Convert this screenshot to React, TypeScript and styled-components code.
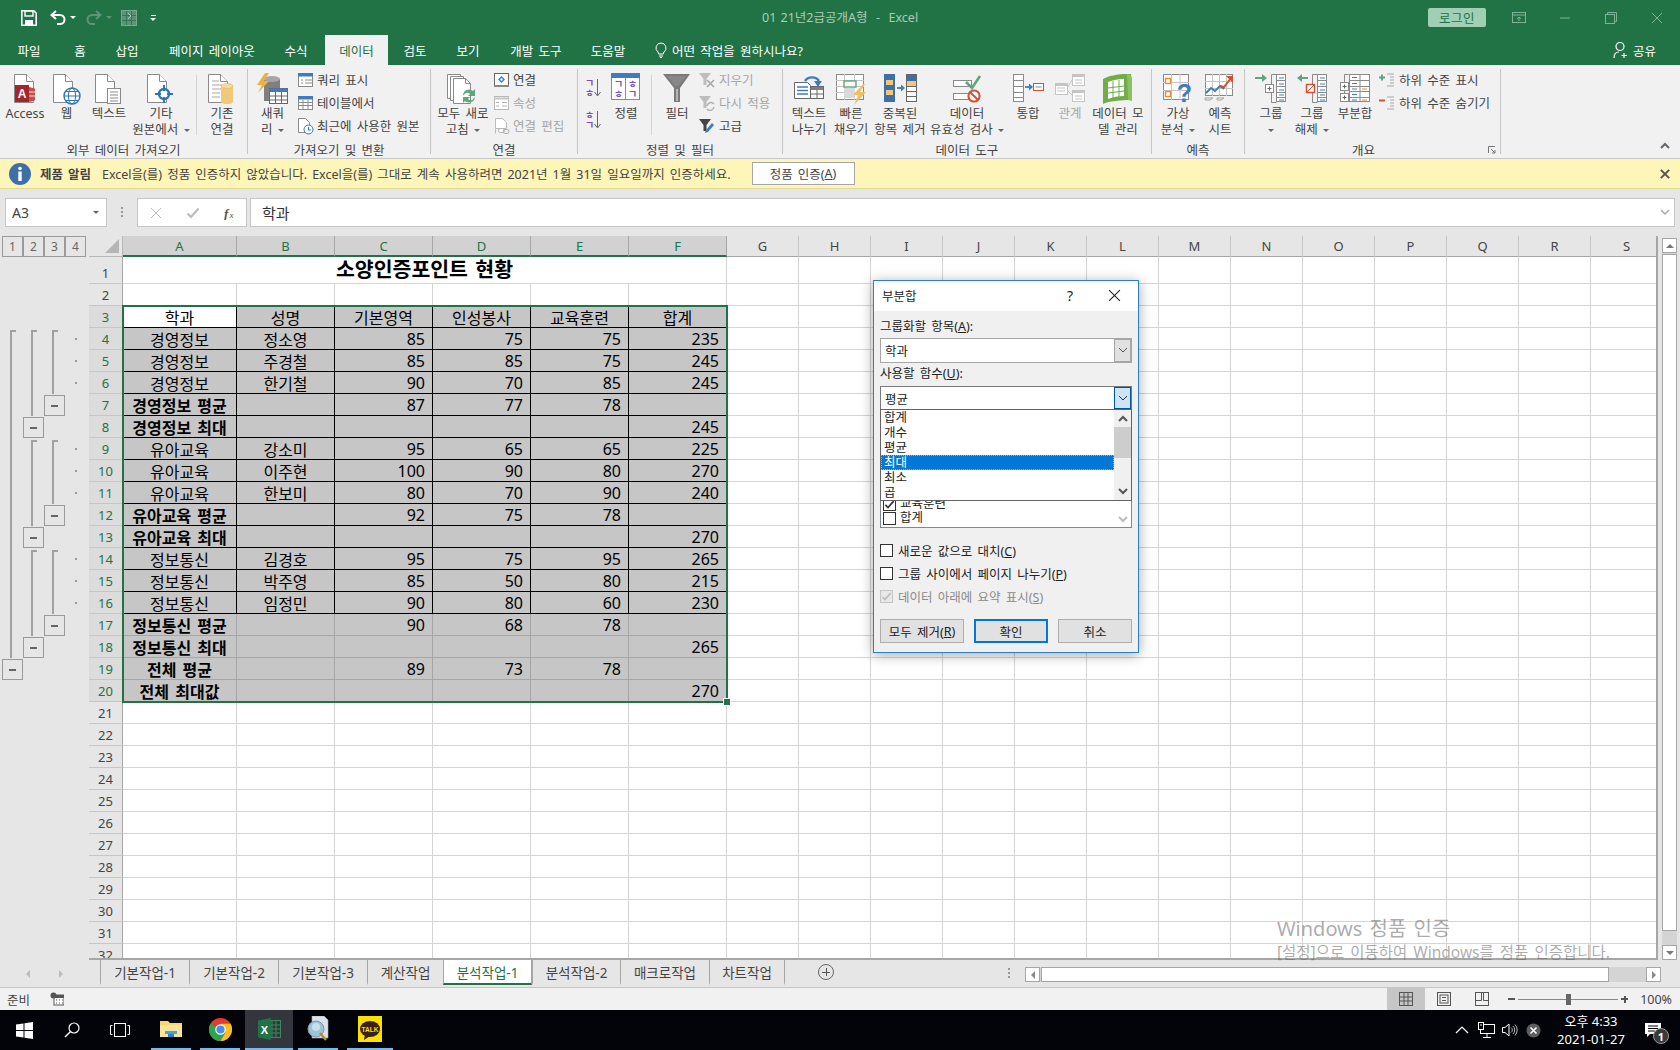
import React from "react";
import styled, { createGlobalStyle } from "styled-components";

const FONT = `"Noto Sans", "Noto Sans CJK KR", sans-serif`;
const GREEN = "#217346";

const Global = createGlobalStyle`
  html, body {
    margin: 0;
    width: 1680px;
    height: 1050px;
    overflow: hidden;
    background: #e6e6e6;
    font-family: ${FONT};
  }
  * { box-sizing: border-box; }
  svg { display: block; flex: none; }
`;

/* ---------- icons ---------- */

const PageBase = () => (
  <>
    <path d="M2.5 1.5h12l7 7v21h-19z" fill="#fff" stroke="#8a8a8a" />
    <path d="M14.5 1.5v7h7" fill="#fff" stroke="#8a8a8a" />
  </>
);

const Icon = ({ w = 32, h = 32, children }: { w?: number; h?: number; children: React.ReactNode }) => (
  <svg width={w} height={h} viewBox={`0 0 ${w} ${h}`}>
    {children}
  </svg>
);

const AccessIcon = () => (
  <Icon w={34}>
    <g transform="translate(4 0)">
      <PageBase />
    </g>
    <path d="M17 14c5 0 10 1 10 2v11c0 1-5 2-10 2z" fill="#c0504d" />
    <path d="M17 19h10M17 23h10" stroke="#fff" strokeWidth="0.8" />
    <rect x="7" y="12" width="14" height="17" fill="#a4262c" />
    <text x="14" y="25" fontSize="12" fontWeight="700" fill="#fff" textAnchor="middle" fontFamily="Liberation Sans">A</text>
  </Icon>
);

const WebIcon = () => (
  <Icon>
    <PageBase />
    <circle cx="21" cy="23" r="8" fill="#fff" stroke="#2f75b5" strokeWidth="1.4" />
    <ellipse cx="21" cy="23" rx="3.6" ry="8" fill="none" stroke="#2f75b5" />
    <path d="M13 23h16M14.5 18.5h13M14.5 27.5h13" stroke="#2f75b5" />
  </Icon>
);

const TextIcon = () => (
  <Icon>
    <PageBase />
    <rect x="14.5" y="15.5" width="13" height="15" fill="#fff" stroke="#8a8a8a" />
    <path d="M17 19h8M17 22h8M17 25h8M17 28h8" stroke="#8a8a8a" />
  </Icon>
);

const OtherIcon = () => (
  <Icon>
    <PageBase />
    <circle cx="19" cy="21" r="5" fill="#fff" stroke="#2f75b5" strokeWidth="2.4" />
    <path d="M19 12v6M19 24v6M10 21h6M22 21h6" stroke="#2f75b5" strokeWidth="2" />
  </Icon>
);

const ExistingIcon = () => (
  <Icon>
    <PageBase />
    <path d="M6 8h7M6 12h12M6 16h12M6 20h8M6 24h8" stroke="#a6a6a6" />
    <rect x="15" y="13" width="12" height="16" fill="#f2c879" />
    <ellipse cx="21" cy="13" rx="6" ry="2.4" fill="#f7dca6" stroke="#e0b060" strokeWidth="0.6" />
    <ellipse cx="21" cy="29" rx="6" ry="2" fill="#f2c879" />
  </Icon>
);

const NewQueryIcon = () => (
  <Icon w={34}>
    <rect x="8" y="6" width="16" height="22" fill="#7f7f7f" />
    <ellipse cx="16" cy="6" rx="8" ry="3" fill="#a6a6a6" />
    <path d="M9 0 1 12h5l-4 8 11-12H8l5-8z" fill="#f0b040" />
    <rect x="13.5" y="15.5" width="18" height="15" fill="#fff" stroke="#666" />
    <rect x="13.5" y="15.5" width="18" height="3.5" fill="#3f7cbf" />
    <path d="M13.5 23h18M13.5 27h18M19.5 19v11M25.5 19v11" stroke="#666" />
  </Icon>
);

const TableSmall = ({ lines = 2 }: { lines?: number }) => (
  <Icon w={17} h={16}>
    <rect x="1.5" y="1.5" width="14" height="13" fill="#fff" stroke="#8a8a8a" />
    <rect x="1" y="1" width="15" height="3.5" fill="#3f7cbf" />
    {lines === 2 ? (
      <path d="M8 8h7M8 11h7M4 8h2M4 11h2" stroke="#8a8a8a" />
    ) : (
      <path d="M2 7.5h13M2 10.5h13M6 5v9M11 5v9" stroke="#8a8a8a" />
    )}
  </Icon>
);

const RecentIcon = () => (
  <Icon w={17} h={18}>
    <path d="M1.5 1.5h7l4 4v10h-11z" fill="#fff" stroke="#8a8a8a" />
    <circle cx="11.5" cy="12.5" r="4.5" fill="#fff" stroke="#2f75b5" />
    <path d="M11.5 10v3h2.5" fill="none" stroke="#2f75b5" />
  </Icon>
);

const RefreshAllIcon = () => (
  <Icon w={34}>
    <path d="M1.5 1.5h13v24h-13z" fill="#fff" stroke="#8a8a8a" />
    <path d="M4.5 3.5h13v24h-13z" fill="#fff" stroke="#8a8a8a" />
    <path d="M7.5 5.5h12l5 5v20h-17z" fill="#fff" stroke="#8a8a8a" />
    <path d="M19.5 5.5v5h5" fill="none" stroke="#8a8a8a" />
    <path d="M17 22a6 6 0 0 1 10-4l2-2v7h-7l2-2a3.5 3.5 0 0 0-6 1z" fill="#5ea77d" />
    <path d="M29 24a6 6 0 0 1-10 4l-2 2v-6h7l-2 2a3.5 3.5 0 0 0 6-1z" fill="#5ea77d" />
  </Icon>
);

const ConnectIcon = () => (
  <Icon w={17} h={16}>
    <rect x="1.5" y="1.5" width="14" height="12" fill="#fff" stroke="#666" />
    <path d="M1 14h15" stroke="#888" strokeWidth="2" />
    <path d="M8.5 4 12 7.5 8.5 11 5 7.5z" fill="#3f7cbf" />
    <circle cx="8.5" cy="7.5" r="1.2" fill="#fff" />
  </Icon>
);

const PropsIcon = () => (
  <Icon w={17} h={16}>
    <rect x="1.5" y="1.5" width="14" height="13" fill="#fff" stroke="#b8b8b8" />
    <path d="M1 3.5h15" stroke="#c4c4c4" strokeWidth="2" />
    <path d="M3 7.5h3M3 11h3M9 7.5h5M9 11h5" stroke="#b0b0b0" />
  </Icon>
);

const EditLinkIcon = () => (
  <Icon w={17} h={18}>
    <path d="M2.5 1.5h7l4 4v6h-11z" fill="#fff" stroke="#bcbcbc" />
    <path d="M2.5 11.5v5" stroke="#bcbcbc" />
    <rect x="5.5" y="11.5" width="6" height="4" rx="2" fill="#fff" stroke="#b0b0b0" />
    <rect x="10" y="12.5" width="6" height="4" rx="2" fill="none" stroke="#b0b0b0" />
  </Icon>
);

const SortIcon = ({ top, bottom }: { top: string; bottom: string }) => (
  <Icon w={20} h={20}>
    <text x="5.5" y="9" fontSize="10" fontWeight="700" fill="#7b4fb5" textAnchor="middle" fontFamily="Noto Sans CJK KR">{top}</text>
    <text x="5.5" y="19" fontSize="10" fontWeight="700" fill="#7b4fb5" textAnchor="middle" fontFamily="Noto Sans CJK KR">{bottom}</text>
    <path d="M13.5 1v16" stroke="#666" />
    <path d="M10.5 14l3 4 3-4" fill="none" stroke="#666" />
  </Icon>
);

const SortBigIcon = () => (
  <Icon w={30} h={28}>
    <rect x="0.5" y="0.5" width="28" height="26" fill="#fff" stroke="#8a8a8a" />
    <rect x="0" y="0" width="29" height="5" fill="#3f7cbf" />
    <path d="M14.5 5v22" stroke="#8a8a8a" />
    <text x="7.5" y="15" fontSize="10" fontWeight="700" fill="#7b4fb5" textAnchor="middle" fontFamily="Noto Sans CJK KR">ㄱ</text>
    <text x="7.5" y="25" fontSize="10" fontWeight="700" fill="#7b4fb5" textAnchor="middle" fontFamily="Noto Sans CJK KR">ㅎ</text>
    <text x="21.5" y="15" fontSize="10" fontWeight="700" fill="#7b4fb5" textAnchor="middle" fontFamily="Noto Sans CJK KR">ㅎ</text>
    <text x="21.5" y="25" fontSize="10" fontWeight="700" fill="#7b4fb5" textAnchor="middle" fontFamily="Noto Sans CJK KR">ㄱ</text>
  </Icon>
);

const FunnelIcon = () => (
  <Icon w={30} h={30}>
    <path d="M1 1h27L18 15v14h-6V15z" fill="#7a7a7a" />
    <path d="M14 16v12h2V16z" fill="#b5b5b5" />
    <path d="M5 3h19l-8 10h-3z" fill="#888" />
  </Icon>
);

const SmallFunnel = ({ color }: { color: string }) => (
  <path d="M0 1h12L7.5 7v6h-3V7z" fill={color} />
);

const ClearIcon = () => (
  <Icon w={17} h={16}>
    <SmallFunnel color="#bdbdbd" />
    <path d="M8 8l7 7M15 8l-7 7" stroke="#a6a6a6" strokeWidth="1.6" />
  </Icon>
);

const ReapplyIcon = () => (
  <Icon w={17} h={16}>
    <SmallFunnel color="#bdbdbd" />
    <path d="M8 11a4 4 0 0 1 7-2M15 12a4 4 0 0 1-7 2" fill="none" stroke="#b0b0b0" strokeWidth="1.5" />
  </Icon>
);

const AdvancedIcon = () => (
  <Icon w={17} h={16}>
    <SmallFunnel color="#444" />
    <path d="M6 15l1-3 6-7 2 2-6 7z" fill="#3f7cbf" />
  </Icon>
);

const SplitIcon = () => (
  <Icon w={32} h={28}>
    <path d="M12 8a8 7 0 0 1 14 0" fill="none" stroke="#3f7cbf" strokeWidth="2.4" />
    <path d="M21 8h8l-4 6z" fill="#3f7cbf" />
    <path d="M1.5 9.5h13l3 3v13h-16z" fill="#fff" stroke="#666" />
    <path d="M4 14h11M4 17.5h11M4 21h11" stroke="#3f7cbf" strokeWidth="1.4" />
    <rect x="17.5" y="13.5" width="13" height="12" fill="#fff" stroke="#666" />
    <rect x="18" y="14" width="12" height="3" fill="#7f7f7f" />
    <path d="M24 17v8M18 21h12" stroke="#666" />
  </Icon>
);

const FlashIcon = () => (
  <Icon w={32} h={32}>
    <rect x="1.5" y="1.5" width="27" height="25" fill="#fff" stroke="#8a8a8a" />
    <path d="M1 7.5h28M1 13.5h28M1 19.5h28M9.5 1v26M19.5 1v26" stroke="#c4c4c4" />
    <rect x="9" y="8" width="12" height="6" fill="#fff" stroke="#5ea77d" strokeWidth="1.4" />
    <rect x="9" y="15" width="11" height="10" fill="#d9d9d9" />
    <path d="M28 11l-10 11h5l-4 10 12-13h-6l5-8z" fill="#f0c060" />
  </Icon>
);

const DupIcon = () => (
  <Icon w={34} h={30}>
    <rect x="1" y="1" width="11" height="28" fill="#3f6fa8" />
    <path d="M3 7h7v5H3zM3 17h7v5H3z" fill="#f0c878" />
    <path d="M14 15h5" stroke="#3f7cbf" strokeWidth="1.8" />
    <path d="M18 11.5l4 3.5-4 3.5z" fill="#3f7cbf" />
    <rect x="23.5" y="1.5" width="10" height="27" fill="#fff" stroke="#666" />
    <rect x="24" y="2" width="9" height="6" fill="#3f6fa8" />
    <rect x="24" y="8" width="9" height="5" fill="#f0c878" />
    <path d="M24 13.5h9M24 18.5h9M24 23.5h9" stroke="#666" />
  </Icon>
);

const ValidateIcon = () => (
  <Icon w={30} h={30}>
    <rect x="1.5" y="7.5" width="18" height="6" fill="#fff" stroke="#8a8a8a" />
    <rect x="1.5" y="20.5" width="18" height="6" fill="#fff" stroke="#8a8a8a" />
    <path d="M14 9l6 6L28 3" fill="none" stroke="#5ea77d" strokeWidth="2.6" />
    <circle cx="22" cy="23" r="5.6" fill="#fff" stroke="#d24f34" strokeWidth="2" />
    <path d="M18 19l8 8" stroke="#d24f34" strokeWidth="2" />
  </Icon>
);

const ConsolidateIcon = () => (
  <Icon w={32} h={30}>
    <rect x="1.5" y="1.5" width="10" height="27" fill="#fff" stroke="#8a8a8a" />
    <path d="M1 7.5h11M1 13.5h11M1 19.5h11M1 24.5h11" stroke="#8a8a8a" />
    <path d="M13 14h5" stroke="#3f7cbf" strokeWidth="1.8" />
    <path d="M17 10.5l4 3.5-4 3.5z" fill="#3f7cbf" />
    <rect x="21.5" y="10.5" width="10" height="7" fill="#fff" stroke="#d24f34" />
    <path d="M23.5 14h6" stroke="#8a8a8a" />
  </Icon>
);

const RelationIcon = () => (
  <Icon w={32} h={30}>
    <rect x="1.5" y="10.5" width="12" height="11" fill="#fff" stroke="#c4c4c4" />
    <rect x="1" y="10" width="13" height="3" fill="#c4c4c4" />
    <rect x="18.5" y="1.5" width="12" height="11" fill="#fff" stroke="#c4c4c4" />
    <rect x="18" y="1" width="13" height="3" fill="#c4c4c4" />
    <rect x="18.5" y="17.5" width="12" height="11" fill="#fff" stroke="#c4c4c4" />
    <rect x="18" y="17" width="13" height="3" fill="#c4c4c4" />
    <path d="M14 14l4-7M14 18l4 4M3 15h8M3 18h8M21 7h7M21 10h7M21 23h7M21 26h7" stroke="#c4c4c4" />
  </Icon>
);

const ModelIcon = () => (
  <Icon w={32} h={32}>
    <path d="M1 6c5-3 14-5 24-5h4v26c-10 0-22 1-28 4z" fill="#70ad47" />
    <path d="M6 9c5-2 10-3 16-3v17c-6 0-11 1-16 3z" fill="#fff" />
    <path d="M6 15l16-2M6 20l16-2M11 8v17M17 7v17" stroke="#70ad47" />
    <path d="M25 1c3 0 5 2 5 5v22l-4-1z" fill="#8bc063" />
  </Icon>
);

const WhatIfIcon = () => (
  <Icon w={32} h={32}>
    <rect x="1.5" y="1.5" width="25" height="25" fill="#fff" stroke="#8a8a8a" />
    <path d="M1 9.5h26M1 17.5h26M9.5 1v26M18 1v26" stroke="#c4c4c4" />
    <rect x="3.5" y="5.5" width="5" height="5" fill="#fff" stroke="#ed8b2c" strokeWidth="1.4" />
    <rect x="3.5" y="18.5" width="5" height="5" fill="#fff" stroke="#ed8b2c" strokeWidth="1.4" />
    <text x="22.5" y="29" fontSize="25" fontWeight="700" fill="#3f7cbf" textAnchor="middle" fontFamily="Liberation Sans">?</text>
  </Icon>
);

const ForecastIcon = () => (
  <Icon w={32} h={30}>
    <rect x="1.5" y="1.5" width="27" height="21" fill="#fff" stroke="#8a8a8a" />
    <path d="M1 8.5h28M1 15.5h28M8.5 1v22M15.5 1v22M22.5 1v22" stroke="#c4c4c4" />
    <path d="M2 20l5-5 4 3 5-5 4 3" fill="none" stroke="#3f7cbf" strokeWidth="2" />
    <path d="M16 13l4 1 7-9" fill="none" stroke="#d24f34" strokeWidth="2" />
    <path d="M22 3h7v7z" fill="#d24f34" />
    <path d="M1 25h8l-3 2H1zM13 25h7l-3 2h-4z" fill="none" stroke="#a6a6a6" />
  </Icon>
);

const OutlineList = () => (
  <>
    <path d="M16.5 1.5h5M16.5 1.5v28h5" fill="none" stroke="#8a8a8a" />
    <rect x="21.5" y="1.5" width="9" height="27" fill="#fff" stroke="#8a8a8a" />
    <path d="M21 7.5h10M21 13.5h10M21 19.5h10M21 24.5h10" stroke="#8a8a8a" />
    <path d="M24 5h5M24 11h5M24 17h5M24 22h5M24 27h5" stroke="#3f7cbf" />
  </>
);

const GroupIcon = () => (
  <Icon w={32} h={32}>
    <OutlineList />
    <path d="M0 5h9" stroke="#5ea77d" strokeWidth="2" />
    <path d="M7 1l5 4-5 4z" fill="#5ea77d" />
    <rect x="10.5" y="11.5" width="8" height="8" fill="#fff" stroke="#8a8a8a" />
    <path d="M12.5 15.5h4M14.5 13.5v4" stroke="#666" />
  </Icon>
);

const UngroupIcon = () => (
  <Icon w={32} h={32}>
    <OutlineList />
    <path d="M3 5h9" stroke="#5ea77d" strokeWidth="2" />
    <path d="M6 1L1 5l5 4z" fill="#5ea77d" />
    <rect x="10.5" y="11.5" width="8" height="8" fill="#fff" stroke="#d24f34" strokeWidth="1.4" />
    <path d="M11 19l7-7" stroke="#d24f34" />
  </Icon>
);

const SubtotalIcon = () => (
  <Icon w={32} h={32}>
    <path d="M5.5 1.5h4M5.5 1.5v27h4" fill="none" stroke="#8a8a8a" />
    <rect x="1.5" y="9.5" width="8" height="8" fill="#fff" stroke="#8a8a8a" />
    <rect x="1.5" y="20.5" width="8" height="8" fill="#fff" stroke="#8a8a8a" />
    <path d="M3.5 13.5h4M5.5 11.5v4M3.5 24.5h4M5.5 22.5v4" stroke="#666" />
    <rect x="10.5" y="1.5" width="20" height="27" fill="#fff" stroke="#8a8a8a" />
    <path d="M10 7.5h21M10 13.5h21M10 18.5h21M10 24.5h21M21 1v28" stroke="#8a8a8a" />
    <path d="M13 4.5h5M13 10.5h5M13 16h5M13 21.5h5M13 27h5" stroke="#3f7cbf" />
    <path d="M23 16h5M23 27h5" stroke="#ed8b2c" />
  </Icon>
);

const ShowDetailIcon = ({ minus }: { minus?: boolean }) => (
  <Icon w={17} h={16}>
    <path d="M8 2h7M11 5h4M11 8h4M11 11h4M8 14h7" stroke="#a6a6a6" />
    {minus ? (
      <path d="M0 5.5h6" stroke="#d24f34" strokeWidth="2" />
    ) : (
      <path d="M0 5.5h6M3 2.5v6" stroke="#5ea77d" strokeWidth="2" />
    )}
  </Icon>
);

const SaveIcon = () => (
  <Icon w={16} h={16}>
    <path d="M.8.8h12L15.2 3v12.2H.8z" fill="none" stroke="#fff" strokeWidth="1.6" />
    <rect x="4" y="1" width="8" height="5" fill="none" stroke="#fff" strokeWidth="1.4" />
    <rect x="4" y="10" width="8" height="5" fill="#fff" />
  </Icon>
);

const UndoIcon = ({ color, flip }: { color: string; flip?: boolean }) => (
  <Icon w={16} h={16}>
    <g transform={flip ? "translate(16 0) scale(-1 1)" : undefined}>
      <path d="M2 5h8a4.5 4.5 0 0 1 0 9H7" fill="none" stroke={color} strokeWidth="2" />
      <path d="M6 1 1.5 5 6 9" fill="none" stroke={color} strokeWidth="2" />
    </g>
  </Icon>
);

const FormIcon = () => (
  <Icon w={16} h={16}>
    <rect x=".5" y=".5" width="15" height="15" fill="#5f9377" stroke="#7ba78f" />
    <path d="M1 5.5h14M1 10.5h14M5.5 1v14M10.5 1v14" stroke="#2e7a52" />
    <path d="M7 3l3 3-3 3" stroke="#a9c9b6" fill="none" />
  </Icon>
);

const RibbonDisplayIcon = () => (
  <Icon w={14} h={12}>
    <rect x=".5" y=".5" width="13" height="10" fill="none" stroke="#7fb397" />
    <path d="M1 3h12" stroke="#7fb397" />
    <path d="M7 9V5M5 7l2-2 2 2" fill="none" stroke="#7fb397" />
  </Icon>
);

const MinimizeIcon = () => (
  <Icon w={12} h={12}>
    <path d="M1 6h10" stroke="#7fb397" />
  </Icon>
);

const RestoreIcon = () => (
  <Icon w={12} h={12}>
    <rect x=".5" y="2.5" width="9" height="9" fill="none" stroke="#7fb397" />
    <path d="M2.5 2.5V.5h9v9h-2" fill="none" stroke="#7fb397" />
  </Icon>
);

const CloseIcon = ({ color = "#7fb397", size = 12, weight = 1 }: { color?: string; size?: number; weight?: number }) => (
  <svg width={size} height={size} viewBox="0 0 12 12">
    <path d="M1 1l10 10M11 1 1 11" stroke={color} strokeWidth={weight} />
  </svg>
);

const BulbIcon = () => (
  <Icon w={12} h={16}>
    <path d="M6 1a5 5 0 0 0-3 9c.6.6.6 1.5.6 2h4.800c0-.5 0-1.400.6-2a5 5 0 0 0-3-9zM4 14h4M5 15.5h2" fill="none" stroke="#fff" />
  </Icon>
);

const ShareIcon = () => (
  <Icon w={16} h={18}>
    <circle cx="7" cy="5.5" r="4" fill="none" stroke="#fff" strokeWidth="1.2" />
    <path d="M1 17c0-4 2-6 5-6M11 12v5M8.500 14.500h5.500" fill="none" stroke="#fff" strokeWidth="1.2" />
  </Icon>
);

const Chevron = ({ color = "#555", width = 1 }: { color?: string; width?: number }) => (
  <svg width="10" height="7" viewBox="0 0 10 7">
    <path d="M1 1l4 4 4-4" fill="none" stroke={color} strokeWidth={width} />
  </svg>
);

const ChevronUp = ({ color = "#555", width = 2 }: { color?: string; width?: number }) => (
  <svg width="10" height="7" viewBox="0 0 10 7">
    <path d="M1 6l4-4 4 4" fill="none" stroke={color} strokeWidth={width} />
  </svg>
);

const Launcher = () => (
  <Icon w={8} h={8}>
    <path d="M.5 7V.5H7" fill="none" stroke="#777" />
    <path d="M3 3l4 4M7 4v3H4" fill="none" stroke="#777" />
  </Icon>
);

const InfoIcon = () => (
  <svg width="22" height="22" viewBox="0 0 22 22">
    <circle cx="11" cy="11" r="11" fill="#3f6fa8" />
    <circle cx="11" cy="5.5" r="1.8" fill="#fff" />
    <rect x="9.3" y="8.5" width="3.4" height="9.5" fill="#fff" />
  </svg>
);

const FxIcon = () => (
  <Icon w={14} h={14}>
    <text x="0" y="12" fontSize="13" fontStyle="italic" fontWeight="700" fill="#555" fontFamily="Liberation Serif">f</text>
    <text x="5.5" y="12" fontSize="9" fontStyle="italic" fill="#555" fontFamily="Liberation Serif">x</text>
  </Icon>
);

const CheckMark = ({ color = "#bdbdbd" }: { color?: string }) => (
  <svg width="14" height="12" viewBox="0 0 14 12">
    <path d="M1.5 6.500 5 10l7.500-8.500" fill="none" stroke={color} strokeWidth="2.2" />
  </svg>
);

const MacroIcon = () => (
  <Icon w={14} h={14}>
    <rect x="4" y="3" width="10" height="10" fill="#fff" stroke="#555" />
    <rect x="4" y="3" width="10" height="3" fill="#555" />
    <path d="M6 8h1M9 8h1M12 8h1M6 11h1M9 11h1M12 11h1" stroke="#555" />
    <circle cx="3.5" cy="3.5" r="3" fill="#555" />
  </Icon>
);

const NormalViewIcon = () => (
  <Icon w={14} h={14}>
    <rect x=".5" y=".5" width="13" height="13" fill="none" stroke="#555" />
    <path d="M5 1v12M9 1v12M1 5h12M1 9h12" stroke="#555" />
  </Icon>
);

const PageViewIcon = () => (
  <Icon w={14} h={14}>
    <rect x=".5" y=".5" width="13" height="13" fill="none" stroke="#555" />
    <rect x="3" y="3" width="8" height="8" fill="none" stroke="#555" />
    <path d="M5 5.5h4M5 8.5h4" stroke="#555" />
  </Icon>
);

const BreakViewIcon = () => (
  <Icon w={14} h={14}>
    <rect x=".5" y=".5" width="13" height="13" fill="none" stroke="#555" />
    <path d="M1 8.5h5.500V1M8.500 1v7.500H13" fill="none" stroke="#555" />
  </Icon>
);

const WinIcon = () => (
  <svg width="17" height="17" viewBox="0 0 17 17">
    <path d="M0 2.500 7.500 1.400v6.700H0zM8.500 1.300 17 0v8.100H8.500zM0 9h7.500v6.600L0 14.500zM8.500 9H17v8l-8.500-1.300z" fill="#fff" />
  </svg>
);

const SearchIcon = () => (
  <svg width="16" height="16" viewBox="0 0 16 16">
    <circle cx="10" cy="6" r="5" fill="none" stroke="#fff" strokeWidth="1.2" />
    <path d="M6.300 9.700 1 15" stroke="#fff" strokeWidth="1.4" />
  </svg>
);

const TaskViewIcon = () => (
  <svg width="20" height="14" viewBox="0 0 20 14">
    <rect x="4.5" y=".5" width="11" height="13" fill="none" stroke="#fff" />
    <path d="M2.500 2.500h-2v9h2M17.500 2.500h2v9h-2" fill="none" stroke="#fff" />
  </svg>
);

const FolderIcon = () => (
  <svg width="22" height="20" viewBox="0 0 22 20">
    <path d="M0 2h8l2 2h12v14H0z" fill="#f7d774" />
    <rect x="0" y="6" width="22" height="12" fill="#fbe39a" />
    <rect x="5" y="12" width="12" height="3" fill="#3fa5e8" />
    <rect x="8" y="15" width="6" height="3" fill="#2a80c0" />
  </svg>
);

const ChromeIcon = () => (
  <svg width="23" height="23" viewBox="0 0 24 24">
    <circle cx="12" cy="12" r="12" fill="#e33b2e" />
    <path d="M12 12 1.600 6A12 12 0 0 0 12 24l5-9z" fill="#2fa54a" />
    <path d="M12 6h10.400A12 12 0 0 1 12 24l5.200-9z" fill="#fbc11a" />
    <circle cx="12" cy="12" r="5.5" fill="#fff" />
    <circle cx="12" cy="12" r="4.3" fill="#4a8bf0" />
  </svg>
);

const ExcelIcon = () => (
  <svg width="23" height="22" viewBox="0 0 23 22">
    <rect x="10" y="2.5" width="12.5" height="17" fill="none" stroke="#3a8a5d" />
    <path d="M14 3v16M18 3v16M10 7h12M10 11h12M10 15h12" stroke="#3a8a5d" />
    <path d="M0 2.500 13 0v22L0 19.500z" fill="#217346" />
    <text x="6.5" y="15.5" fontSize="11" fontWeight="700" fill="#fff" textAnchor="middle" fontFamily="Liberation Sans">X</text>
  </svg>
);

const AppIcon = () => (
  <svg width="22" height="26" viewBox="0 0 22 26">
    <path d="M5 0h12l4 4v18H5z" fill="#dbe2ea" stroke="#a5b0ba" strokeWidth=".6" />
    <circle cx="9" cy="13" r="8" fill="#9cc3d8" stroke="#7f97a5" />
    <circle cx="9" cy="11" r="4" fill="#c8e0ec" />
    <path d="M13 17l6 7" stroke="#b58a3c" strokeWidth="2.4" />
  </svg>
);

const KakaoIcon = () => (
  <svg width="24" height="26" viewBox="0 0 24 26">
    <rect width="24" height="26" fill="#fae100" />
    <ellipse cx="12" cy="13" rx="10" ry="8" fill="#3c1e1e" />
    <path d="M7 18 6 24l6-4z" fill="#3c1e1e" />
    <text x="12" y="15.5" fontSize="6.5" fontWeight="700" fill="#fae100" textAnchor="middle" fontFamily="Liberation Sans">TALK</text>
  </svg>
);

const CaretUpIcon = () => (
  <svg width="14" height="8" viewBox="0 0 14 8">
    <path d="M1 7l6-6 6 6" fill="none" stroke="#fff" strokeWidth="1.2" />
  </svg>
);

const NetworkIcon = () => (
  <svg width="17" height="16" viewBox="0 0 17 16">
    <rect x="2.5" y="2.5" width="14" height="9" fill="none" stroke="#fff" />
    <path d="M9 12v3M5 15.500h8" stroke="#fff" />
    <rect x=".5" y=".5" width="5" height="7" fill="#000" stroke="#fff" />
    <path d="M2 3h2" stroke="#fff" />
  </svg>
);

const VolumeIcon = () => (
  <svg width="16" height="14" viewBox="0 0 16 14">
    <path d="M.5 4.500h2.500L7 1v12L3 9.500H.5z" fill="none" stroke="#fff" />
    <path d="M9 4.500a3 3 0 0 1 0 5M11 3a5.500 5.500 0 0 1 0 8M13 1.500a8 8 0 0 1 0 11" fill="none" stroke="#bbb" />
  </svg>
);

const OfflineIcon = () => (
  <svg width="15" height="15" viewBox="0 0 15 15">
    <circle cx="7.5" cy="7.5" r="7" fill="#5e5e5e" />
    <path d="M4.500 4.500l6 6M10.500 4.500l-6 6" stroke="#fff" strokeWidth="1.6" />
  </svg>
);

const NotifyIcon = () => (
  <svg width="16" height="14" viewBox="0 0 16 14">
    <path d="M0 0h16v11H5l-3 3v-3H0z" fill="#fff" />
    <path d="M3 3h10M3 5.500h10M3 8h7" stroke="#000" />
  </svg>
);

/* ---------- chrome ---------- */

const Page = styled.div`
  position: relative;
  width: 1680px;
  height: 1050px;
  display: flex;
  flex-direction: column;
  overflow: hidden;
`;

const TitleBar = styled.div`
  height: 35px;
  background: ${GREEN};
  display: flex;
  align-items: center;
  padding-left: 21px;
  position: relative;
`;

const Quick = styled.div<{ $m?: number }>`
  margin-left: ${(p) => p.$m ?? 0}px;
  display: flex;
  align-items: center;
`;

const MiniCaret = styled.span<{ $color?: string }>`
  display: inline-block;
  width: 0;
  height: 0;
  border-left: 3px solid transparent;
  border-right: 3px solid transparent;
  border-top: 3px solid ${(p) => p.$color ?? "#666"};
  vertical-align: middle;
`;

const Customize = styled.div`
  margin-left: 13px;
  display: flex;
  flex-direction: column;
  gap: 2px;
  align-items: center;
  &::before {
    content: "";
    width: 5px;
    height: 1px;
    background: #fff;
  }
`;

const DocTitle = styled.div`
  position: absolute;
  left: 762px;
  top: 7px;
  color: #a9cdb8;
  font-size: 12.5px;
  white-space: pre;
  word-spacing: 1px;
`;

const TitleRight = styled.div`
  margin-left: auto;
  display: flex;
  align-items: center;
`;

const LoginBtn = styled.div`
  width: 58px;
  height: 19px;
  background: #a0cfb3;
  color: ${GREEN};
  border-radius: 2px;
  font-size: 12.5px;
  display: flex;
  align-items: center;
  justify-content: center;
  margin-right: 10px;
  letter-spacing: 0.5px;
`;

const WinBtn = styled.div`
  width: 46px;
  display: flex;
  justify-content: center;
`;

const TabBar = styled.div`
  height: 30px;
  background: ${GREEN};
  display: flex;
  align-items: stretch;
  word-spacing: 2px;
`;

const Tab = styled.div<{ $w: number; $active?: boolean }>`
  width: ${(p) => p.$w}px;
  margin-left: ${(p) => (p.$active ? 5 : 0)}px;
  display: flex;
  align-items: center;
  justify-content: center;
  font-size: 12.5px;
  color: ${(p) => (p.$active ? GREEN : "#fff")};
  background: ${(p) => (p.$active ? "#f1f1f1" : "transparent")};
`;

const TellMe = styled.div`
  margin-left: 17px;
  display: flex;
  align-items: center;
  gap: 5px;
  color: #fff;
  font-size: 12.5px;
`;

const ShareBox = styled.div`
  margin-left: auto;
  padding-right: 24px;
  display: flex;
  align-items: center;
  gap: 4px;
  color: #fff;
  font-size: 12.5px;
`;

const Ribbon = styled.div`
  height: 94px;
  background: #f1f1f1;
  border-bottom: 1px solid #c6c6c6;
  display: flex;
  align-items: flex-start;
  padding-top: 4px;
  position: relative;
  word-spacing: 2px;
`;

const Group = styled.div<{ $w: number }>`
  width: ${(p) => p.$w}px;
  height: 85px;
  border-right: 1px solid #c6c6c6;
  display: flex;
  flex-direction: column;
  position: relative;
  flex: none;
`;

const GroupRow = styled.div<{ $pad?: number }>`
  height: 68px;
  display: flex;
  align-items: flex-start;
  padding-left: ${(p) => p.$pad ?? 0}px;
`;

const GroupLabel = styled.div<{ $pr?: number }>`
  height: 17px;
  padding: 5px ${(p) => p.$pr ?? 0}px 0 0;
  line-height: 17px;
  text-align: center;
  font-size: 12.5px;
  color: #444;
  white-space: nowrap;
`;

const Big = styled.div<{ $w: number; $off?: boolean }>`
  width: ${(p) => p.$w}px;
  flex: none;
  display: flex;
  flex-direction: column;
  align-items: center;
  padding-top: 4px;
  font-size: 12.5px;
  line-height: 16px;
  color: ${(p) => (p.$off ? "#a6a6a6" : "#444")};
  white-space: nowrap;
  text-align: center;
`;

const BigIcon = styled.div`
  height: 33px;
  display: flex;
  align-items: flex-start;
  justify-content: center;
`;

const InnerSep = styled.div<{ $l: number; $r: number }>`
  width: 1px;
  height: 60px;
  flex: none;
  margin: 6px ${(p) => p.$r}px 0 ${(p) => p.$l}px;
  background: #d4d4d4;
`;

const SmallList = styled.div`
  margin-top: -1px;
  display: flex;
  flex-direction: column;
  flex: none;
`;

const SmallItem = styled.div<{ $off?: boolean }>`
  height: 23px;
  display: flex;
  align-items: center;
  gap: 3px;
  font-size: 12.5px;
  color: ${(p) => (p.$off ? "#a6a6a6" : "#444")};
  white-space: nowrap;
`;

const SortCol = styled.div`
  width: 20px;
  margin: 0 1px 0 6px;
  display: flex;
  flex-direction: column;
  gap: 12px;
  padding-top: 9px;
  flex: none;
`;

const LauncherBox = styled.div`
  position: absolute;
  right: 4px;
  bottom: 0;
`;

const Collapse = styled.div`
  position: absolute;
  right: 10px;
  bottom: 9px;
`;

const Notice = styled.div`
  height: 30px;
  background: #fdf6b8;
  border-bottom: 1px solid #e0d998;
  display: flex;
  align-items: center;
  padding-left: 9px;
  font-size: 12.5px;
  color: #444;
  white-space: nowrap;
  word-spacing: 1.8px;
`;

const NoticeTitle = styled.strong`
  margin-left: 9px;
  width: 62px;
  flex: none;
  white-space: nowrap;
`;

const NoticeBtn = styled.div`
  margin-left: 21px;
  width: 103px;
  height: 23px;
  background: #fff;
  border: 1px solid #a6a6a6;
  display: flex;
  align-items: center;
  justify-content: center;
`;

const NoticeClose = styled.div`
  margin-left: auto;
  margin-right: 10px;
`;

const FormulaRow = styled.div`
  height: 47px;
  padding: 9px 5px 0;
  display: flex;
  align-items: flex-start;
  background: #e6e6e6;
`;

const NameBox = styled.div`
  width: 102px;
  height: 29px;
  background: #fff;
  border: 1px solid #c6c6c6;
  display: flex;
  align-items: center;
  justify-content: space-between;
  padding: 0 7px 0 6px;
  font-size: 14px;
  color: #444;
`;

const Dots = styled.div`
  width: 30px;
  height: 29px;
  display: flex;
  justify-content: center;
  align-items: center;
  &::before {
    content: "";
    width: 2px;
    height: 11px;
    background-image: repeating-linear-gradient(#999 0 2px, transparent 2px 4px);
  }
`;

const FxBox = styled.div`
  width: 110px;
  height: 29px;
  background: #fff;
  border: 1px solid #c6c6c6;
  display: flex;
  align-items: center;
  justify-content: space-between;
  padding: 0 8px 0 12px;
`;

const FormulaInput = styled.div`
  margin-left: 3px;
  width: 1425px;
  height: 29px;
  background: #fff;
  border: 1px solid #c6c6c6;
  display: flex;
  align-items: center;
  justify-content: space-between;
  padding: 0 4px 0 11px;
  font-size: 15px;
  color: #333;
`;

/* ---------- sheet ---------- */

const SheetArea = styled.div`
  height: 724px;
  display: flex;
  background: #e6e6e6;
  overflow: hidden;
`;

const ROWS = `21px 27px repeat(31, 22px)`;

const Gutter = styled.div`
  width: 89px;
  flex: none;
  padding-left: 2px;
  display: grid;
  grid-template-columns: repeat(4, 21px);
  grid-template-rows: ${ROWS};
`;

const LevelBtn = styled.div<{ $c: number }>`
  grid-column: ${(p) => p.$c};
  grid-row: 1;
  border: 1px solid #9a9a9a;
  background: #e6e6e6;
  display: flex;
  align-items: center;
  justify-content: center;
  font-size: 12px;
  color: #666;
`;

const OutBar = styled.div<{ $c: number; $from: number; $to: number }>`
  grid-column: ${(p) => p.$c};
  grid-row: ${(p) => p.$from + 1} / ${(p) => p.$to + 1};
  margin: 2px 7px 0 8px;
  border-left: 2px solid #a0a0a0;
  border-top: 2px solid #a0a0a0;
`;

const OutBtn = styled.div<{ $c: number; $r: number }>`
  grid-column: ${(p) => p.$c};
  grid-row: ${(p) => p.$r + 1};
  width: 21px;
  height: 21px;
  margin-top: 1px;
  border: 1px solid #9a9a9a;
  background: #e6e6e6;
  display: flex;
  align-items: center;
  justify-content: center;
  &::before {
    content: "";
    width: 7px;
    height: 2px;
    background: #666;
  }
`;

const OutDot = styled.div<{ $r: number }>`
  grid-column: 4;
  grid-row: ${(p) => p.$r + 1};
  width: 2px;
  height: 2px;
  background: #999;
  align-self: center;
  justify-self: center;
`;

const GridWrap = styled.div`
  width: 1569px;
  flex: none;
  overflow: hidden;
  border-right: 2px solid #a6a6a6;
  border-bottom: 2px solid #a6a6a6;
`;

const Grid = styled.div`
  position: relative;
  display: grid;
  grid-template-columns: 34px 114px repeat(5, 98px) repeat(13, 72px);
  grid-template-rows: ${ROWS};
  background: #fff;
`;

const Corner = styled.div`
  background: #e6e6e6;
  border-right: 1px solid #b8b8b8;
  border-bottom: 1px solid #b8b8b8;
  display: flex;
  align-items: flex-end;
  justify-content: flex-end;
  padding: 0 3px 3px 0;
  &::before {
    content: "";
    width: 14px;
    height: 14px;
    background: #b5b5b5;
    clip-path: polygon(100% 0, 100% 100%, 0 100%);
  }
`;

const ColHead = styled.div<{ $on?: boolean }>`
  background: ${(p) => (p.$on ? "#d2d2d2" : "#e6e6e6")};
  color: ${(p) => (p.$on ? GREEN : "#444")};
  border-right: 1px solid ${(p) => (p.$on ? "#a6a6a6" : "#c6c6c6")};
  border-bottom: ${(p) => (p.$on ? `2px solid ${GREEN}` : "1px solid #a6a6a6")};
  font-size: 13px;
  display: flex;
  align-items: center;
  justify-content: center;
`;

const RowHead = styled.div<{ $on?: boolean }>`
  background: ${(p) => (p.$on ? "#dcdcdc" : "#e6e6e6")};
  color: ${(p) => (p.$on ? GREEN : "#444")};
  border-right: 1px solid #a6a6a6;
  border-bottom: 1px solid #c6c6c6;
  font-size: 13px;
  display: flex;
  align-items: flex-end;
  justify-content: center;
  padding-bottom: 1px;
`;

const Title = styled.div`
  grid-column: span 6;
  border-bottom: 1px solid #d4d4d4;
  border-right: 1px solid #d4d4d4;
  display: flex;
  align-items: center;
  justify-content: center;
  padding-bottom: 4px;
  font-size: 20.5px;
  font-weight: 700;
  color: #000;
  word-spacing: 2px;
`;

const Cell = styled.div<{ $line?: string; $fill?: string; $right?: boolean; $bold?: boolean }>`
  background: ${(p) => p.$fill ?? "#fff"};
  border-right: 1px solid ${(p) => p.$line ?? "#d4d4d4"};
  border-bottom: 1px solid ${(p) => p.$line ?? "#d4d4d4"};
  display: flex;
  align-items: center;
  justify-content: ${(p) => (p.$right ? "flex-end" : "center")};
  padding-right: ${(p) => (p.$right ? 7 : 0)}px;
  font-size: 16px;
  font-weight: ${(p) => (p.$bold ? 700 : 400)};
  color: #000;
  white-space: nowrap;
  word-spacing: 2px;
`;

const Selection = styled.div`
  grid-column: 2 / 8;
  grid-row: 4 / 22;
  position: absolute;
  top: -1px;
  left: -1px;
  right: -1px;
  bottom: -1px;
  border: 2px solid ${GREEN};
  pointer-events: none;
  &::after {
    content: "";
    position: absolute;
    right: -4px;
    bottom: -4px;
    width: 6px;
    height: 6px;
    background: ${GREEN};
    outline: 1px solid #fff;
  }
`;

const VScroll = styled.div`
  width: 15px;
  margin: 2px 0 0 4px;
  display: flex;
  flex-direction: column;
  flex: none;
  background: #d4d4d4;
`;

const ScrollBtn = styled.div`
  height: 15px;
  background: #fff;
  border: 1px solid #a6a6a6;
  display: flex;
  align-items: center;
  justify-content: center;
  flex: none;
`;

const Arrow = styled.span<{ $dir: "up" | "down" | "left" | "right"; $color?: string }>`
  width: 0;
  height: 0;
  border: 4px solid transparent;
  ${(p) => {
    const c = p.$color ?? "#777";
    if (p.$dir === "up") return `border-bottom: 4px solid ${c}; border-top: 0;`;
    if (p.$dir === "down") return `border-top: 4px solid ${c}; border-bottom: 0;`;
    if (p.$dir === "left") return `border-right: 4px solid ${c}; border-left: 0;`;
    return `border-left: 4px solid ${c}; border-right: 0;`;
  }}
`;

const VThumb = styled.div`
  height: 677px;
  margin-top: 1px;
  background: #fff;
  border: 1px solid #a6a6a6;
  flex: none;
`;

const VSpacer = styled.div`
  flex: 1;
`;

const Watermark = styled.div`
  position: absolute;
  left: 1277px;
  top: 916px;
  color: rgba(90, 90, 90, 0.5);
  pointer-events: none;
  white-space: nowrap;
  word-spacing: 2px;
`;

const WmLine = styled.div<{ $size: number }>`
  font-size: ${(p) => p.$size}px;
  line-height: ${(p) => (p.$size > 16 ? 26 : 20)}px;
`;

/* ---------- dialog ---------- */

const Dialog = styled.div`
  position: absolute;
  left: 873px;
  top: 280px;
  width: 266px;
  height: 373px;
  background: #f0f0f0;
  border: 1px solid #2b7fc7;
  box-shadow: 0 2px 12px rgba(0, 0, 0, 0.35);
  display: flex;
  flex-direction: column;
  font-size: 12.5px;
  color: #222;
  word-spacing: 2px;
`;

const DlgTitle = styled.div`
  height: 30px;
  background: #fff;
  display: flex;
  align-items: center;
  padding: 0 0 2px 8px;
  flex: none;
`;

const DlgHelp = styled.span`
  margin-left: auto;
  font-size: 14px;
`;

const DlgClose = styled.span`
  margin-left: 35px;
  margin-right: 17px;
`;

const DlgBody = styled.div`
  display: flex;
  flex-direction: column;
  padding: 6px 6px 0;
`;

const DlgLabel = styled.div<{ $top?: number }>`
  height: 20px;
  line-height: 20px;
  margin-top: ${(p) => p.$top ?? 0}px;
  white-space: nowrap;
`;

const Key = styled.u``;

const Combo = styled.div<{ $h: number; $focus?: boolean; $top: number }>`
  position: relative;
  height: ${(p) => p.$h}px;
  margin-top: ${(p) => p.$top}px;
  background: #fff;
  border: 1px solid ${(p) => (p.$focus ? "#7a7a7a" : "#a6a6a6")};
  display: flex;
  align-items: center;
  padding-left: 4px;
`;

const ComboBtn = styled.div<{ $focus?: boolean }>`
  position: absolute;
  right: 0;
  top: 0;
  bottom: 0;
  width: 17px;
  background: ${(p) => (p.$focus ? "#cce4f7" : "#e1e1e1")};
  border: 1px solid ${(p) => (p.$focus ? "#005499" : "#a6a6a6")};
  display: flex;
  align-items: center;
  justify-content: center;
`;

const DropList = styled.div`
  position: absolute;
  left: -1px;
  right: -1px;
  top: 100%;
  height: 92px;
  background: #fff;
  border: 1px solid #646464;
  display: flex;
  z-index: 2;
`;

const DropItems = styled.div`
  flex: 1;
  display: flex;
  flex-direction: column;
`;

const DropItem = styled.div<{ $on?: boolean }>`
  height: 15px;
  line-height: 15px;
  padding-left: 3px;
  background: ${(p) => (p.$on ? "#0078d7" : "#fff")};
  color: ${(p) => (p.$on ? "#fff" : "#222")};
  outline: ${(p) => (p.$on ? "1px dotted #f0a040" : "none")};
  outline-offset: -1px;
`;

const DropScroll = styled.div`
  width: 17px;
  flex: none;
  background: #f0f0f0;
  display: flex;
  flex-direction: column;
  align-items: center;
`;

const DropArrow = styled.div`
  height: 17px;
  display: flex;
  align-items: center;
  justify-content: center;
`;

const DropThumb = styled.div`
  width: 100%;
  height: 31px;
  background: #cdcdcd;
`;

const FieldList = styled.div`
  position: relative;
  height: 98px;
  margin-top: 20px;
  background: #fff;
  border: 1px solid #828790;
  display: flex;
  flex-direction: column;
  justify-content: flex-end;
  padding: 0 2px 2px;
`;

const FieldRow = styled.div`
  height: 14px;
  display: flex;
  align-items: center;
  gap: 4px;
  line-height: 14px;
`;

const Box = styled.div<{ $off?: boolean }>`
  width: 13px;
  height: 13px;
  background: ${(p) => (p.$off ? "#e8e8e8" : "#fff")};
  border: 1px solid ${(p) => (p.$off ? "#c4c4c4" : "#333")};
  flex: none;
  display: flex;
  align-items: center;
  justify-content: center;
  svg { width: 11px; height: 9px; }
`;

const FieldScroll = styled.div`
  position: absolute;
  right: 3px;
  bottom: 4px;
`;

const Option = styled.div<{ $off?: boolean; $top?: number }>`
  height: 23px;
  margin-top: ${(p) => p.$top ?? 0}px;
  display: flex;
  align-items: center;
  gap: 5px;
  color: ${(p) => (p.$off ? "#8a8a8a" : "#222")};
  white-space: nowrap;
`;

const DlgButtons = styled.div`
  margin-top: 11px;
  display: flex;
  gap: 10px;
`;

const DlgBtn = styled.div<{ $w: number; $main?: boolean }>`
  width: ${(p) => p.$w}px;
  height: 24px;
  background: #e1e1e1;
  border: ${(p) => (p.$main ? "2px solid #0078d7" : "1px solid #adadad")};
  display: flex;
  align-items: center;
  justify-content: center;
`;

/* ---------- bottom ---------- */

const TabStrip = styled.div`
  height: 28px;
  display: flex;
  align-items: flex-start;
  background: #e6e6e6;
  border-bottom: 1px solid #c6c6c6;
`;

const NavArrows = styled.div`
  width: 100px;
  height: 27px;
  padding: 0 37px 0 26px;
  display: flex;
  align-items: center;
  justify-content: space-between;
  flex: none;
`;

const SheetTab = styled.div<{ $w: number; $on?: boolean; $lastTab?: boolean }>`
  width: ${(p) => p.$w}px;
  height: 25px;
  flex: none;
  display: flex;
  align-items: center;
  justify-content: center;
  font-size: 13.5px;
  color: ${(p) => (p.$on ? GREEN : "#444")};
  background: ${(p) => (p.$on ? "#fff" : "transparent")};
  border-bottom: 2px solid ${(p) => (p.$on ? GREEN : "transparent")};
  border-left: 1px solid #a6a6a6;
  border-right: ${(p) => (p.$on || p.$lastTab ? "1px solid #a6a6a6" : "0")};
`;

const AddSheet = styled.div`
  margin: 4px 0 0 33px;
  width: 16px;
  height: 16px;
  border: 1px solid #666;
  border-radius: 50%;
  position: relative;
  flex: none;
  &::before, &::after {
    content: "";
    position: absolute;
    background: #555;
  }
  &::before { left: 3px; right: 3px; top: 6.5px; height: 1px; }
  &::after { top: 3px; bottom: 3px; left: 6.5px; width: 1px; }
`;

const StripDots = styled.div`
  margin: 8px 0 0 174px;
  width: 2px;
  height: 10px;
  background-image: repeating-linear-gradient(#999 0 2px, transparent 2px 4px);
  flex: none;
`;

const HScroll = styled.div`
  margin: 7px 0 0 15px;
  width: 636px;
  height: 15px;
  display: flex;
  background: #d4d4d4;
  flex: none;
`;

const HBtn = styled.div`
  width: 15px;
  height: 15px;
  background: #fff;
  border: 1px solid #a6a6a6;
  display: flex;
  align-items: center;
  justify-content: center;
  flex: none;
`;

const HThumb = styled.div`
  width: 568px;
  height: 15px;
  margin-left: 1px;
  background: #fff;
  border: 1px solid #a6a6a6;
  flex: none;
`;

const HGap = styled.div`
  flex: 1;
`;

const StatusBar = styled.div`
  height: 22px;
  background: #f1f1f1;
  display: flex;
  align-items: center;
  font-size: 12.5px;
  color: #444;
`;

const ReadyText = styled.div`
  margin-left: 7px;
  width: 43px;
`;

const ViewBtn = styled.div<{ $on?: boolean; $first?: boolean }>`
  width: 38px;
  height: 22px;
  display: flex;
  align-items: center;
  justify-content: center;
  background: ${(p) => (p.$on ? "#c6c6c6" : "transparent")};
  margin-left: ${(p) => (p.$first ? "auto" : "0")};
`;

const ZoomSign = styled.div<{ $plus?: boolean }>`
  width: 7px;
  height: 2px;
  background: #555;
  position: relative;
  margin: 0 ${(p) => (p.$plus ? 0 : 3)}px 0 ${(p) => (p.$plus ? 3 : 7)}px;
  &::after {
    content: "";
    display: ${(p) => (p.$plus ? "block" : "none")};
    position: absolute;
    left: 2.5px;
    top: -2.5px;
    width: 2px;
    height: 7px;
    background: #555;
  }
`;

const Slider = styled.div`
  position: relative;
  width: 100px;
  height: 1px;
  background: #888;
  &::after {
    content: "";
    position: absolute;
    left: 48px;
    top: -5px;
    width: 5px;
    height: 11px;
    background: #666;
  }
`;

const ZoomText = styled.div`
  margin: 0 8px 0 12px;
`;

const Taskbar = styled.div`
  height: 40px;
  background: #03040a;
  display: flex;
  align-items: stretch;
  position: relative;
`;

const TaskBtn = styled.div<{ $w: number; $run?: boolean; $active?: boolean; $m?: number }>`
  position: relative;
  width: ${(p) => p.$w}px;
  margin-left: ${(p) => p.$m ?? 0}px;
  display: flex;
  align-items: center;
  justify-content: center;
  flex: none;
  background: ${(p) => (p.$active ? "#33363c" : "transparent")};
  ${(p) => (p.$run ? "border-bottom: 2px solid #76b9ed;" : "")}
`;

const Tray = styled.div`
  margin-left: auto;
  display: flex;
  align-items: center;
  color: #fff;
`;

const TrayItem = styled.div<{ $w: number }>`
  width: ${(p) => p.$w}px;
  display: flex;
  justify-content: center;
`;

const Clock = styled.div`
  width: 78px;
  margin: 0 6px 0 8px;
  text-align: center;
  font-size: 13px;
  line-height: 18px;
`;

const Notify = styled.div`
  position: relative;
  width: 44px;
  display: flex;
  justify-content: flex-start;
  padding-left: 9px;
`;

const Badge = styled.div`
  position: absolute;
  left: 17px;
  top: 5px;
  width: 16px;
  height: 16px;
  border-radius: 50%;
  background: #3a3a3a;
  border: 1px solid #999;
  font-size: 11px;
  font-weight: 700;
  display: flex;
  align-items: center;
  justify-content: center;
  color: #fff;
`;

/* ---------- data ---------- */

const COLS = "ABCDEFGHIJKLMNOPQRS".split("");
const BLANKS = Array.from({ length: 13 });

type Row = [string, string, string, string, string, string];

const TABLE: Row[] = [
  ["학과", "성명", "기본영역", "인성봉사", "교육훈련", "합계"],
  ["경영정보", "정소영", "85", "75", "75", "235"],
  ["경영정보", "주경철", "85", "85", "75", "245"],
  ["경영정보", "한기철", "90", "70", "85", "245"],
  ["경영정보 평균", "", "87", "77", "78", ""],
  ["경영정보 최대", "", "", "", "", "245"],
  ["유아교육", "강소미", "95", "65", "65", "225"],
  ["유아교육", "이주현", "100", "90", "80", "270"],
  ["유아교육", "한보미", "80", "70", "90", "240"],
  ["유아교육 평균", "", "92", "75", "78", ""],
  ["유아교육 최대", "", "", "", "", "270"],
  ["정보통신", "김경호", "95", "75", "95", "265"],
  ["정보통신", "박주영", "85", "50", "80", "215"],
  ["정보통신", "임정민", "90", "80", "60", "230"],
  ["정보통신 평균", "", "90", "68", "78", ""],
  ["정보통신 최대", "", "", "", "", "265"],
  ["전체 평균", "", "89", "73", "78", ""],
  ["전체 최대값", "", "", "", "", "270"],
];

const TABS = [
  { t: "파일", w: 58 },
  { t: "홈", w: 44 },
  { t: "삽입", w: 50 },
  { t: "페이지 레이아웃", w: 120 },
  { t: "수식", w: 48 },
  { t: "데이터", w: 63, active: true },
  { t: "검토", w: 54 },
  { t: "보기", w: 52 },
  { t: "개발 도구", w: 84 },
  { t: "도움말", w: 60 },
];

const SHEETS = [
  { t: "기본작업-1", w: 89 },
  { t: "기본작업-2", w: 89 },
  { t: "기본작업-3", w: 89 },
  { t: "계산작업", w: 76 },
  { t: "분석작업-1", w: 89, on: true },
  { t: "분석작업-2", w: 88 },
  { t: "매크로작업", w: 89 },
  { t: "차트작업", w: 76, last: true },
];

const OUTLINE_BARS = [
  { c: 1, from: 4, to: 19 },
  { c: 2, from: 4, to: 8 },
  { c: 2, from: 9, to: 13 },
  { c: 2, from: 14, to: 18 },
  { c: 3, from: 4, to: 7 },
  { c: 3, from: 9, to: 12 },
  { c: 3, from: 14, to: 17 },
];

const OUTLINE_DOTS = [4, 5, 6, 9, 10, 11, 14, 15, 16];

function dataCell(r: number, c: number, v: string) {
  const rowNo = r + 3;
  const line = rowNo >= 17 ? "#a6a6a6" : "#000";
  const key = `${rowNo}-${c}`;
  const fill = rowNo === 3 && c === 0 ? "#fff" : "#c6c6c6";
  const right = rowNo > 3 && c >= 2;
  const bold = rowNo > 3 && c === 0 && v.includes(" ");
  return (
    <Cell key={key} $line={line} $fill={fill} $right={right} $bold={bold}>
      {v}
    </Cell>
  );
}

function Sheet() {
  const rows = [];
  rows.push(
    <RowHead key="r1">1</RowHead>,
    <Title key="title">소양인증포인트 현황</Title>,
    ...BLANKS.map((_, i) => <Cell key={`1-${i}`} />)
  );
  rows.push(
    <RowHead key="r2">2</RowHead>,
    ...COLS.map((c) => <Cell key={`2-${c}`} />)
  );
  TABLE.forEach((row, r) => {
    rows.push(
      <RowHead key={`r${r + 3}`} $on>
        {r + 3}
      </RowHead>,
      ...row.map((v, c) => dataCell(r, c, v)),
      ...BLANKS.map((_, i) => <Cell key={`${r}-b${i}`} />)
    );
  });
  for (let n = 21; n <= 32; n++) {
    rows.push(
      <RowHead key={`r${n}`}>{n}</RowHead>,
      ...COLS.map((c) => <Cell key={`${n}-${c}`} />)
    );
  }

  return (
    <GridWrap>
      <Grid>
        <Corner />
        {COLS.map((c, i) => (
          <ColHead key={c} $on={i < 6}>
            {c}
          </ColHead>
        ))}
        {rows}
        <Selection />
      </Grid>
    </GridWrap>
  );
}

function SubtotalDialog() {
  return (
    <Dialog>
      <DlgTitle>
        부분합
        <DlgHelp>?</DlgHelp>
        <DlgClose>
          <CloseIcon color="#222" size={13} />
        </DlgClose>
      </DlgTitle>
      <DlgBody>
        <DlgLabel>
          그룹화할 항목(<Key>A</Key>):
        </DlgLabel>
        <Combo $h={25} $top={1}>
          학과
          <ComboBtn>
            <Chevron />
          </ComboBtn>
        </Combo>
        <DlgLabel $top={1}>
          사용할 함수(<Key>U</Key>):
        </DlgLabel>
        <Combo $h={24} $top={2} $focus>
          평균
          <ComboBtn $focus>
            <Chevron color="#333" />
          </ComboBtn>
          <DropList>
            <DropItems>
              <DropItem>합계</DropItem>
              <DropItem>개수</DropItem>
              <DropItem>평균</DropItem>
              <DropItem $on>최대</DropItem>
              <DropItem>최소</DropItem>
              <DropItem>곱</DropItem>
            </DropItems>
            <DropScroll>
              <DropArrow>
                <ChevronUp />
              </DropArrow>
              <DropThumb />
              <VSpacer />
              <DropArrow>
                <Chevron width={2} />
              </DropArrow>
            </DropScroll>
          </DropList>
        </Combo>
        <FieldList>
          <FieldRow>
            <Box>
              <CheckMark color="#333" />
            </Box>
            교육훈련
          </FieldRow>
          <FieldRow>
            <Box />
            합계
          </FieldRow>
          <FieldScroll>
            <Chevron color="#bbb" width={2} />
          </FieldScroll>
        </FieldList>
        <Option $top={11}>
          <Box />
          <span>
            새로운 값으로 대치(<Key>C</Key>)
          </span>
        </Option>
        <Option>
          <Box />
          <span>
            그룹 사이에서 페이지 나누기(<Key>P</Key>)
          </span>
        </Option>
        <Option $off>
          <Box $off>
            <CheckMark />
          </Box>
          <span>
            데이터 아래에 요약 표시(<Key>S</Key>)
          </span>
        </Option>
        <DlgButtons>
          <DlgBtn $w={84}>
            모두 제거(<Key>R</Key>)
          </DlgBtn>
          <DlgBtn $w={74} $main>
            확인
          </DlgBtn>
          <DlgBtn $w={74}>취소</DlgBtn>
        </DlgButtons>
      </DlgBody>
    </Dialog>
  );
}

function RibbonBar() {
  return (
    <Ribbon>
      <Group $w={248}>
        <GroupRow $pad={4}>
          <Big $w={42}>
            <BigIcon><AccessIcon /></BigIcon>
            Access
          </Big>
          <Big $w={41}>
            <BigIcon><WebIcon /></BigIcon>
            웹
          </Big>
          <Big $w={44}>
            <BigIcon><TextIcon /></BigIcon>
            텍스트
          </Big>
          <Big $w={60}>
            <BigIcon><OtherIcon /></BigIcon>
            기타
            <span>원본에서 <MiniCaret /></span>
          </Big>
          <InnerSep $l={5} $r={6} />
          <Big $w={38}>
            <BigIcon><ExistingIcon /></BigIcon>
            기존
            <span>연결</span>
          </Big>
        </GroupRow>
        <GroupLabel>외부 데이터 가져오기</GroupLabel>
      </Group>
      <Group $w={183}>
        <GroupRow>
          <Big $w={49}>
            <BigIcon><NewQueryIcon /></BigIcon>
            새쿼
            <span>리 <MiniCaret /></span>
          </Big>
          <SmallList>
            <SmallItem><TableSmall />쿼리 표시</SmallItem>
            <SmallItem><TableSmall lines={3} />테이블에서</SmallItem>
            <SmallItem><RecentIcon />최근에 사용한 원본</SmallItem>
          </SmallList>
        </GroupRow>
        <GroupLabel>가져오기 및 변환</GroupLabel>
      </Group>
      <Group $w={147}>
        <GroupRow $pad={2}>
          <Big $w={60}>
            <BigIcon><RefreshAllIcon /></BigIcon>
            모두 새로
            <span>고침 <MiniCaret /></span>
          </Big>
          <SmallList>
            <SmallItem><ConnectIcon />연결</SmallItem>
            <SmallItem $off><PropsIcon />속성</SmallItem>
            <SmallItem $off><EditLinkIcon />연결 편집</SmallItem>
          </SmallList>
        </GroupRow>
        <GroupLabel>연결</GroupLabel>
      </Group>
      <Group $w={205}>
        <GroupRow>
          <SortCol>
            <SortIcon top="ㄱ" bottom="ㅎ" />
            <SortIcon top="ㅎ" bottom="ㄱ" />
          </SortCol>
          <Big $w={42}>
            <BigIcon><SortBigIcon /></BigIcon>
            정렬
          </Big>
          <InnerSep $l={4} $r={3} />
          <Big $w={44}>
            <BigIcon><FunnelIcon /></BigIcon>
            필터
          </Big>
          <SmallList>
            <SmallItem $off><ClearIcon />지우기</SmallItem>
            <SmallItem $off><ReapplyIcon />다시 적용</SmallItem>
            <SmallItem><AdvancedIcon />고급</SmallItem>
          </SmallList>
        </GroupRow>
        <GroupLabel>정렬 및 필터</GroupLabel>
      </Group>
      <Group $w={369}>
        <GroupRow $pad={2}>
          <Big $w={48}>
            <BigIcon><SplitIcon /></BigIcon>
            텍스트
            <span>나누기</span>
          </Big>
          <Big $w={36}>
            <BigIcon><FlashIcon /></BigIcon>
            빠른
            <span>채우기</span>
          </Big>
          <Big $w={62}>
            <BigIcon><DupIcon /></BigIcon>
            중복된
            <span>항목 제거</span>
          </Big>
          <Big $w={72}>
            <BigIcon><ValidateIcon /></BigIcon>
            데이터
            <span>유효성 검사 <MiniCaret /></span>
          </Big>
          <Big $w={50}>
            <BigIcon><ConsolidateIcon /></BigIcon>
            통합
          </Big>
          <Big $w={34} $off>
            <BigIcon><RelationIcon /></BigIcon>
            관계
          </Big>
          <Big $w={62}>
            <BigIcon><ModelIcon /></BigIcon>
            데이터 모
            <span>델 관리</span>
          </Big>
        </GroupRow>
        <GroupLabel>데이터 도구</GroupLabel>
      </Group>
      <Group $w={93}>
        <GroupRow $pad={2}>
          <Big $w={48}>
            <BigIcon><WhatIfIcon /></BigIcon>
            가상
            <span>분석 <MiniCaret /></span>
          </Big>
          <Big $w={36}>
            <BigIcon><ForecastIcon /></BigIcon>
            예측
            <span>시트</span>
          </Big>
        </GroupRow>
        <GroupLabel>예측</GroupLabel>
      </Group>
      <Group $w={256}>
        <GroupRow $pad={4}>
          <Big $w={44}>
            <BigIcon><GroupIcon /></BigIcon>
            그룹
            <span><MiniCaret /></span>
          </Big>
          <Big $w={38}>
            <BigIcon><UngroupIcon /></BigIcon>
            그룹
            <span>해제 <MiniCaret /></span>
          </Big>
          <Big $w={48}>
            <BigIcon><SubtotalIcon /></BigIcon>
            부분합
          </Big>
          <SmallList>
            <SmallItem><ShowDetailIcon />하위 수준 표시</SmallItem>
            <SmallItem><ShowDetailIcon minus />하위 수준 숨기기</SmallItem>
          </SmallList>
        </GroupRow>
        <GroupLabel $pr={18}>개요</GroupLabel>
        <LauncherBox><Launcher /></LauncherBox>
      </Group>
      <Collapse><ChevronUp color="#666" /></Collapse>
    </Ribbon>
  );
}

export default function App() {
  return (
    <Page>
      <Global />
      <TitleBar>
        <SaveIcon />
        <Quick $m={13}><UndoIcon color="#fff" /></Quick>
        <Quick $m={4}><MiniCaret $color="#fff" /></Quick>
        <Quick $m={10}><UndoIcon color="#5f9377" flip /></Quick>
        <Quick $m={4}><MiniCaret $color="#5f9377" /></Quick>
        <Quick $m={9}><FormIcon /></Quick>
        <Customize><MiniCaret $color="#fff" /></Customize>
        <DocTitle>01 21년2급공개A형  -  Excel</DocTitle>
        <TitleRight>
          <LoginBtn>로그인</LoginBtn>
          <WinBtn><RibbonDisplayIcon /></WinBtn>
          <WinBtn><MinimizeIcon /></WinBtn>
          <WinBtn><RestoreIcon /></WinBtn>
          <WinBtn><CloseIcon /></WinBtn>
        </TitleRight>
      </TitleBar>
      <TabBar>
        {TABS.map((t) => (
          <Tab key={t.t} $w={t.w} $active={t.active}>{t.t}</Tab>
        ))}
        <TellMe>
          <BulbIcon />
          어떤 작업을 원하시나요?
        </TellMe>
        <ShareBox>
          <ShareIcon />
          공유
        </ShareBox>
      </TabBar>
      <RibbonBar />
      <Notice>
        <InfoIcon />
        <NoticeTitle>제품 알림</NoticeTitle>
        Excel을(를) 정품 인증하지 않았습니다. Excel을(를) 그대로 계속 사용하려면 2021년 1월 31일 일요일까지 인증하세요.
        <NoticeBtn>정품 인증(<Key>A</Key>)</NoticeBtn>
        <NoticeClose><CloseIcon color="#555" size={10} weight={2.4} /></NoticeClose>
      </Notice>
      <FormulaRow>
        <NameBox>
          A3
          <MiniCaret />
        </NameBox>
        <Dots />
        <FxBox>
          <CloseIcon color="#bdbdbd" />
          <CheckMark />
          <FxIcon />
        </FxBox>
        <FormulaInput>
          학과
          <Chevron color="#aaa" width={1.5} />
        </FormulaInput>
      </FormulaRow>
      <SheetArea>
        <Gutter>
          {[1, 2, 3, 4].map((n) => (
            <LevelBtn key={n} $c={n}>{n}</LevelBtn>
          ))}
          {OUTLINE_BARS.map((b) => (
            <React.Fragment key={`${b.c}-${b.from}`}>
              <OutBar $c={b.c} $from={b.from} $to={b.to} />
              <OutBtn $c={b.c} $r={b.to} />
            </React.Fragment>
          ))}
          {OUTLINE_DOTS.map((r) => (
            <OutDot key={r} $r={r} />
          ))}
        </Gutter>
        <Sheet />
        <VScroll>
          <ScrollBtn>
            <Arrow $dir="up" />
          </ScrollBtn>
          <VThumb />
          <VSpacer />
          <ScrollBtn>
            <Arrow $dir="down" />
          </ScrollBtn>
        </VScroll>
      </SheetArea>
      <TabStrip>
        <NavArrows>
          <Arrow $dir="left" $color="#bdbdbd" />
          <Arrow $dir="right" $color="#bdbdbd" />
        </NavArrows>
        {SHEETS.map((s) => (
          <SheetTab key={s.t} $w={s.w} $on={s.on} $lastTab={s.last}>{s.t}</SheetTab>
        ))}
        <AddSheet />
        <StripDots />
        <HScroll>
          <HBtn><Arrow $dir="left" $color="#888" /></HBtn>
          <HThumb />
          <HGap />
          <HBtn><Arrow $dir="right" $color="#888" /></HBtn>
        </HScroll>
      </TabStrip>
      <StatusBar>
        <ReadyText>준비</ReadyText>
        <MacroIcon />
        <ViewBtn $on $first><NormalViewIcon /></ViewBtn>
        <ViewBtn><PageViewIcon /></ViewBtn>
        <ViewBtn><BreakViewIcon /></ViewBtn>
        <ZoomSign />
        <Slider />
        <ZoomSign $plus />
        <ZoomText>100%</ZoomText>
      </StatusBar>
      <Taskbar>
        <TaskBtn $w={48}><WinIcon /></TaskBtn>
        <TaskBtn $w={48}><SearchIcon /></TaskBtn>
        <TaskBtn $w={48}><TaskViewIcon /></TaskBtn>
        <TaskBtn $w={40} $m={7} $run><FolderIcon /></TaskBtn>
        <TaskBtn $w={40} $m={9} $run><ChromeIcon /></TaskBtn>
        <TaskBtn $w={48} $m={5} $run $active><ExcelIcon /></TaskBtn>
        <TaskBtn $w={40} $m={5} $run><AppIcon /></TaskBtn>
        <TaskBtn $w={46} $m={9} $run><KakaoIcon /></TaskBtn>
        <Tray>
          <TrayItem $w={24}><CaretUpIcon /></TrayItem>
          <TrayItem $w={24}><NetworkIcon /></TrayItem>
          <TrayItem $w={24}><VolumeIcon /></TrayItem>
          <TrayItem $w={22}><OfflineIcon /></TrayItem>
          <Clock>오후 4:33<br />2021-01-27</Clock>
          <Notify>
            <NotifyIcon />
            <Badge>1</Badge>
          </Notify>
        </Tray>
      </Taskbar>
      <SubtotalDialog />
      <Watermark>
        <WmLine $size={20}>Windows 정품 인증</WmLine>
        <WmLine $size={15.5}>[설정]으로 이동하여 Windows를 정품 인증합니다.</WmLine>
      </Watermark>
    </Page>
  );
}
